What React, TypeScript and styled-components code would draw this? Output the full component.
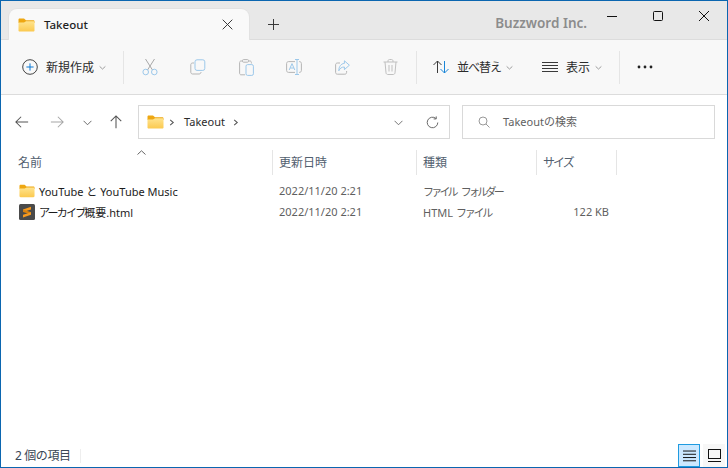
import React from "react";
import styled, { createGlobalStyle } from "styled-components";

const GlobalStyle = createGlobalStyle`
  html, body { margin: 0; padding: 0; background: #fff; }
  * { box-sizing: border-box; }
  body { font-family: "Noto Sans", "Noto Sans CJK JP", sans-serif; font-size: 12px; color: #1b1b1b; }
`;

const Window = styled.div`
  width: 728px;
  height: 468px;
  border: 1px solid #0b66b0;
  display: flex;
  flex-direction: column;
  background: #fff;
  overflow: hidden;
`;

const TitleBar = styled.div`
  height: 39px;
  flex: none;
  display: flex;
  background: #e8e8e8;
  border-bottom: 1px solid #dcdcdc;
  padding-left: 8px;
`;

const Tab = styled.div`
  width: 240px;
  height: 31px;
  margin-top: 8px;
  padding: 0 16px 0 9px;
  display: flex;
  align-items: center;
  gap: 9px;
  background: #f9f9f9;
  border-radius: 8px 8px 0 0;
  box-shadow: 0 0 0 1px #e2e2e2;
  clip-path: inset(-1px -1px 0 -1px);
`;

const TabTitle = styled.span`
  flex: 1;
  font-size: 11.5px;
  font-weight: 500;
  color: #1f1f1f;
  margin-top: -1px;
`;

const AddTab = styled.div`
  width: 48px;
  margin-top: 8px;
  display: flex;
  align-items: center;
  justify-content: center;
`;

const Brand = styled.div`
  margin-left: auto;
  margin-top: 13px;
  margin-right: 2px;
  font-size: 13.5px;
  font-weight: 600;
  line-height: 19px;
  color: #8c8c8c;
`;

const Controls = styled.div`
  display: flex;
`;

const ControlButton = styled.div`
  width: 46px;
  height: 29px;
  display: flex;
  align-items: center;
  justify-content: center;
`;

const Toolbar = styled.div`
  height: 55px;
  flex: none;
  display: flex;
  align-items: center;
  padding-left: 13px;
  background: #f8f8f8;
  border-bottom: 1px solid #dcdcdc;
`;

const Divider = styled.div`
  width: 1px;
  height: 33px;
  background: #e5e5e5;
`;

const ToolItem = styled.div<{ $width: number; $gap?: number; $pad?: number }>`
  width: ${(p) => p.$width}px;
  height: 32px;
  display: flex;
  align-items: center;
  justify-content: ${(p) => (p.$gap ? "flex-start" : "center")};
  gap: ${(p) => p.$gap ?? 0}px;
  padding-left: ${(p) => p.$pad ?? 0}px;
  color: #2b2b2b;
  white-space: nowrap;
`;

const ToolLabel = styled.span<{ $track?: number }>`
  margin: -1px -3px 0 0;
  letter-spacing: ${(p) => p.$track ?? 0}px;
`;

const IconGroup = styled.div`
  display: flex;
  padding: 0 2px;
`;

const NavRow = styled.div`
  height: 55px;
  flex: none;
  display: flex;
  align-items: center;
  padding: 0 11px 1px 3px;
`;

const NavButton = styled.div<{ $width: number }>`
  width: ${(p) => p.$width}px;
  display: flex;
  justify-content: center;
  align-items: center;
`;

const AddressBox = styled.div`
  width: 312px;
  height: 34px;
  margin-left: 6px;
  border: 1px solid #d9d9d9;
  display: flex;
  align-items: center;
  padding: 0 8px;
`;

const Crumb = styled.span`
  color: #2b2b2b;
  font-size: 11px;
  margin: 0 7px 0 9px;
  padding-bottom: 2px;
`;

const CrumbArrow = styled.span`
  display: flex;
  margin-left: 4px;
  &:last-of-type { margin-left: 0; }
`;

const AddressEnd = styled.div`
  margin-left: auto;
  display: flex;
  align-items: center;
  gap: 23px;
  padding-right: 2px;
`;

const SearchBox = styled.div`
  width: 253px;
  height: 34px;
  margin-left: 12px;
  border: 1px solid #d9d9d9;
  display: flex;
  align-items: center;
  gap: 13px;
  padding-left: 15px;
  font-size: 11px;
  color: #5f5f5f;
`;

const SearchHint = styled.span`
  padding-bottom: 2px;
`;

const Columns = "272px 144px 120px 80px";

const HeaderRow = styled.div`
  height: 25px;
  flex: none;
  display: grid;
  grid-template-columns: ${Columns};
  align-items: stretch;
`;

const HeaderCell = styled.div`
  position: relative;
  display: flex;
  align-items: center;
  padding: 0 0 2px 6px;
  border-right: 1px solid #e5e5e5;
  color: #52606f;
  &:first-child { padding-left: 17px; }
`;

const SortCaret = styled.svg`
  position: absolute;
  left: 136px;
  top: 0;
`;

const List = styled.div`
  flex: 1;
  padding-top: 5px;
`;

const Row = styled.div`
  height: 21px;
  display: grid;
  grid-template-columns: ${Columns};
  align-items: center;
  font-size: 11px;
`;

const NameCell = styled.div`
  display: flex;
  align-items: center;
  gap: 4px;
  padding-left: 18px;
  color: #1b1b1b;
  white-space: nowrap;
`;

const InfoCell = styled.div<{ $right?: boolean }>`
  padding-left: 6px;
  padding-right: ${(p) => (p.$right ? 8 : 0)}px;
  text-align: ${(p) => (p.$right ? "right" : "left")};
  color: #5f5f5f;
  white-space: nowrap;
`;

/* the reference's UI font has much narrower kana than Noto Sans CJK */
const Kana = styled.span<{ $track: number }>`
  letter-spacing: ${(p) => p.$track}px;
  word-spacing: 5px;
`;

const StatusBar = styled.div`
  height: 23px;
  flex: none;
  display: flex;
  align-items: center;
  padding-left: 14px;
  color: #3a4656;
`;

const StatusText = styled.span`
  width: 65px;
  letter-spacing: -0.4px;
  padding-bottom: 2px;
`;

const StatusDivider = styled.div`
  width: 1px;
  height: 14px;
  margin-right: auto;
  background: #eeeeee;
`;

const ViewSwitch = styled.div<{ $active?: boolean }>`
  width: 22px;
  height: 23px;
  margin-right: ${(p) => (p.$active ? 3 : 2)}px;
  display: flex;
  align-items: center;
  justify-content: center;
  background: ${(p) => (p.$active ? "#cce8ff" : "#f7f7f7")};
  border: 1px solid ${(p) => (p.$active ? "#1f9be0" : "transparent")};
`;

const Line = ({ d, size = 16, color = "#5c5c5c", w = 1 }: { d: string; size?: number; color?: string; w?: number }) => (
  <svg width={size} height={size} viewBox="0 0 16 16" fill="none" stroke={color} strokeWidth={w}>
    <path d={d} />
  </svg>
);

const Folder = ({ w = 17, h = 14 }: { w?: number; h?: number }) => (
  <svg width={w} height={h} viewBox="0 0 17 14">
    <defs>
      <linearGradient id="fold" x1="0" y1="0" x2="0" y2="1">
        <stop offset="0" stopColor="#ffe48f" />
        <stop offset="1" stopColor="#fbc94f" />
      </linearGradient>
    </defs>
    <path d="M0.5 1.6C0.5 .9 1 .4 1.7 .4H6L8 2.2H15.3C16 2.2 16.5 2.7 16.5 3.4V5H.5Z" fill="#eea712" />
    <path d="M.5 4.4L6 4.4 8 3.2H15.3C16 3.2 16.5 3.7 16.5 4.4V12.4C16.5 13.1 16 13.6 15.3 13.6H1.7C1 13.6 .5 13.1 .5 12.4Z" fill="url(#fold)" />
  </svg>
);

const SublimeIcon = () => (
  <svg width="16" height="16" viewBox="0 0 16 16">
    <rect width="16" height="16" rx="1.5" fill="#4a4a4a" />
    <path d="M12 2.8V5.4L4 8V5.4Z" fill="#f79a1e" />
    <path d="M4 5.6L12 8.2V10.6L4 8Z" fill="#d9820f" />
    <path d="M12 8.2V10.8L4 13.4V10.8Z" fill="#f79a1e" />
  </svg>
);

const Chevron = () => <Line size={7} d="M1.5 5.5L8 11.5L14.5 5.5" color="#909090" w={2} />;

const CutIcon = () => (
  <svg width="16" height="18" viewBox="0 0 16 18" fill="none" strokeWidth="1">
    <path d="M3.5 1L10.5 12M12.5 1L5.5 12" stroke="#a8a8a8" />
    <circle cx="3.7" cy="14" r="2.8" stroke="#9cc8ea" />
    <circle cx="12.3" cy="14" r="2.8" stroke="#9cc8ea" />
  </svg>
);

const CopyIcon = () => (
  <svg width="16" height="16" viewBox="0 0 16 16" fill="none">
    <path d="M4 4H2.5C1.4 4 .8 4.8 .8 5.8V13.2C.8 14.3 1.6 15 2.6 15H9C10.2 15 11 14.2 11 13" stroke="#b5b5b5" />
    <rect x="5" y=".8" width="9.8" height="10.6" rx="2" stroke="#9cc8ea" fill="#f8f8f8" />
  </svg>
);

const PasteIcon = () => (
  <svg width="15" height="17" viewBox="0 0 15 17" fill="none">
    <path d="M6 15.8H2C1 15.8 .6 15 .6 14V3.5C.6 2.6 1.2 2 2 2H11C12 2 12.4 2.8 12.4 3.5V4.5" stroke="#b5b5b5" />
    <rect x="3.5" y=".6" width="6" height="2.6" rx="1" stroke="#b5b5b5" fill="#f8f8f8" />
    <rect x="7" y="5.6" width="7.4" height="10.8" rx="1.6" stroke="#9cc8ea" />
  </svg>
);

const RenameIcon = () => (
  <svg width="16" height="16" viewBox="0 0 16 16" fill="none">
    <path d="M9 2.6H2.6C1.4 2.6 .6 3.4 .6 4.6V11.4C.6 12.6 1.4 13.4 2.6 13.4H9M13 2.6H13.4C14.6 2.6 15.4 3.4 15.4 4.6V11.4C15.4 12.6 14.6 13.4 13.4 13.4H13" stroke="#b5b5b5" />
    <path d="M3.2 11L6 4.6L8.8 11M4.2 9H7.8" stroke="#9cc8ea" />
    <path d="M11 .6V15.4M9 .5H13M9 15.5H13" stroke="#9cc8ea" />
  </svg>
);

const ShareIcon = () => (
  <svg width="15" height="15" viewBox="0 0 15 15" fill="none">
    <path d="M5 3H2.4C1.3 3 .6 3.8 .6 4.8V12.4C.6 13.5 1.3 14.2 2.4 14.2H9.8C11 14.2 11.6 13.4 11.6 12.4V11" stroke="#b5b5b5" />
    <path d="M9.4 .8L14.4 5.2L9.4 9.6V7C6.6 7 5 8.2 3.8 10.8C3.8 6.6 6 3.6 9.4 3.4Z" stroke="#9cc8ea" fill="#f8f8f8" />
  </svg>
);

const TrashIcon = () => (
  <svg width="15" height="16" viewBox="0 0 15 16" fill="none" stroke="#c0c0c0">
    <path d="M.5 3H14.5M5 3V2C5 1 5.7 .5 6.5 .5H8.5C9.3 .5 10 1 10 2V3" />
    <path d="M2 3L3 13.8C3.1 14.8 3.8 15.5 4.8 15.5H10.2C11.2 15.5 11.9 14.8 12 13.8L13 3" />
    <path d="M6 6V12.5M9 6V12.5" />
  </svg>
);

const SortIcon = () => (
  <svg width="16" height="14" viewBox="0 0 16 14" fill="none">
    <path d="M4.5 13V1M.5 5L4.5 1L8.5 5" stroke="#3a3a3a" />
    <path d="M11.5 1V13M7.5 9L11.5 13L15.5 9" stroke="#1a86d8" />
  </svg>
);

const App: React.FC = () => (
  <>
    <GlobalStyle />
    <Window>
      <TitleBar>
        <Tab>
          <Folder />
          <TabTitle>Takeout</TabTitle>
          <Line size={11} w={1.4} d="M1 1L15 15M15 1L1 15" color="#333" />
        </Tab>
        <AddTab>
          <Line size={11} w={1.4} d="M8 0V16M0 8H16" color="#333" />
        </AddTab>
        <Brand>Buzzword Inc.</Brand>
        <Controls>
          <ControlButton>
            <svg width="10" height="10" viewBox="0 0 10 10">
              <path d="M0 5.5H10" stroke="#111" />
            </svg>
          </ControlButton>
          <ControlButton>
            <svg width="10" height="10" viewBox="0 0 10 10" fill="none">
              <rect x=".5" y=".5" width="9" height="9" rx="1" stroke="#111" />
            </svg>
          </ControlButton>
          <ControlButton>
            <svg width="10" height="10" viewBox="0 0 10 10">
              <path d="M0 0L10 10M10 0L0 10" stroke="#111" />
            </svg>
          </ControlButton>
        </Controls>
      </TitleBar>

      <Toolbar>
        <ToolItem $width={109} $gap={8} $pad={8}>
          <svg width="16" height="16" viewBox="0 0 16 16" fill="none">
            <circle cx="8" cy="8" r="7.3" stroke="#444" />
            <path d="M8 4.4V11.6M4.4 8H11.6" stroke="#0a78d4" />
          </svg>
          <ToolLabel>新規作成</ToolLabel>
          <Chevron />
        </ToolItem>
        <Divider />
        <IconGroup>
          <ToolItem $width={48}><CutIcon /></ToolItem>
          <ToolItem $width={48}><CopyIcon /></ToolItem>
          <ToolItem $width={48}><PasteIcon /></ToolItem>
          <ToolItem $width={48}><RenameIcon /></ToolItem>
          <ToolItem $width={48}><ShareIcon /></ToolItem>
          <ToolItem $width={48}><TrashIcon /></ToolItem>
        </IconGroup>
        <Divider />
        <ToolItem $width={108} $gap={8} $pad={16}>
          <SortIcon />
          <ToolLabel $track={-1}>並べ替え</ToolLabel>
          <Chevron />
        </ToolItem>
        <ToolItem $width={94} $gap={8} $pad={17}>
          <Line d="M0 3.5H16M0 6.5H16M0 9.5H16M0 12.5H16" color="#3a3a3a" />
          <ToolLabel>表示</ToolLabel>
          <Chevron />
        </ToolItem>
        <Divider />
        <ToolItem $width={50}>
          <svg width="16" height="4" viewBox="0 0 16 4" fill="#222">
            <circle cx="2" cy="2" r="1.4" />
            <circle cx="8" cy="2" r="1.4" />
            <circle cx="14" cy="2" r="1.4" />
          </svg>
        </ToolItem>
      </Toolbar>

      <NavRow>
        <NavButton $width={36}><Line size={14} w={1.2} d="M15 8H1M7 2L1 8L7 14" color="#555" /></NavButton>
        <NavButton $width={34}><Line size={14} w={1.2} d="M1 8H15M9 2L15 8L9 14" color="#a6a6a6" /></NavButton>
        <NavButton $width={26}><Line size={9} w={1.7} d="M1 5L8 12L15 5" color="#666" /></NavButton>
        <NavButton $width={32}><Line size={14} w={1.2} d="M8 15V1M2 7L8 1L14 7" color="#555" /></NavButton>
        <AddressBox>
          <Folder />
          <CrumbArrow>
            <Line size={7} w={2.4} d="M5 2L12 8L5 14" color="#555" />
          </CrumbArrow>
          <Crumb>Takeout</Crumb>
          <CrumbArrow>
            <Line size={7} w={2.4} d="M5 2L12 8L5 14" color="#555" />
          </CrumbArrow>
          <AddressEnd>
            <Line size={9} w={1.6} d="M1 5L8 12L15 5" color="#666" />
            <Line size={13} w={1.2} d="M14.5 8A6.5 6.5 0 1 1 12.2 3M12.6 .5V3.6H9.4" color="#666" />
          </AddressEnd>
        </AddressBox>
        <SearchBox>
          <svg width="12" height="12" viewBox="0 0 12 12" fill="none" stroke="#999">
            <circle cx="5" cy="5" r="4" />
            <path d="M8 8L11.5 11.5" />
          </svg>
          <SearchHint>Takeoutの検索</SearchHint>
        </SearchBox>
      </NavRow>

      <HeaderRow>
        <HeaderCell>
          名前
          <SortCaret width="9" height="5" viewBox="0 0 9 5" fill="none" stroke="#666">
            <path d="M.5 4.5L4.5 .8L8.5 4.5" />
          </SortCaret>
        </HeaderCell>
        <HeaderCell>更新日時</HeaderCell>
        <HeaderCell>種類</HeaderCell>
        <HeaderCell><Kana $track={-2}>サイズ</Kana></HeaderCell>
      </HeaderRow>

      <List>
        <Row>
          <NameCell><Folder w={16} h={14} />YouTube と YouTube Music</NameCell>
          <InfoCell>2022/11/20 2:21</InfoCell>
          <InfoCell><Kana $track={-2.8}>ファイル フォルダー</Kana></InfoCell>
          <InfoCell $right />
        </Row>
        <Row>
          <NameCell>
            <SublimeIcon />
            <span><Kana $track={-1.8}>アーカイブ</Kana>概要.html</span>
          </NameCell>
          <InfoCell>2022/11/20 2:21</InfoCell>
          <InfoCell>HTML <Kana $track={-2.2}>ファイル</Kana></InfoCell>
          <InfoCell $right>122 KB</InfoCell>
        </Row>
      </List>

      <StatusBar>
        <StatusText>2 個の項目</StatusText>
        <StatusDivider />
        <ViewSwitch $active>
          <Line size={13} d="M0 2.5H16M0 6.5H16M0 10.5H16M0 14.5H16" color="#111" w={1.2} />
        </ViewSwitch>
        <ViewSwitch>
          <svg width="13" height="13" viewBox="0 0 13 13" fill="none" stroke="#111">
            <rect x=".5" y=".5" width="12" height="9" />
            <path d="M0 12.5H13" />
          </svg>
        </ViewSwitch>
      </StatusBar>
    </Window>
  </>
);

export default App;
